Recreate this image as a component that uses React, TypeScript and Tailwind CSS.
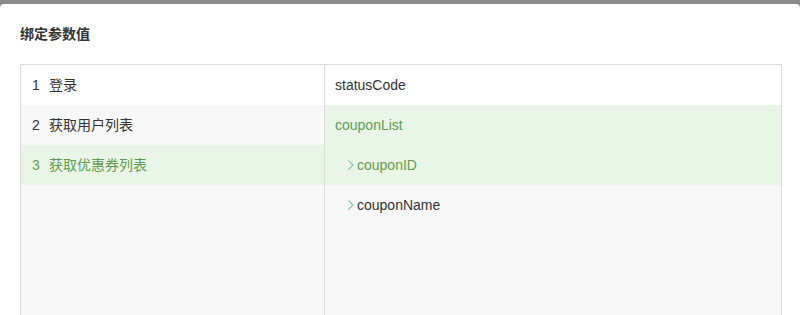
import React from "react";

const Chevron = () => (
  <svg width="8" height="12" viewBox="0 0 8 12" className="mr-[2px]">
    <path d="M1.5 1.5 L6 6 L1.5 10.5" fill="none" stroke="#8cc4b0" strokeWidth="1.2" />
  </svg>
);

export default function App() {
  const font = { fontFamily: '"Liberation Sans", "Noto Sans CJK SC", sans-serif' };
  return (
    <div className="w-[800px] h-[315px] bg-[#8a8a8a] pt-[4px] overflow-hidden" style={font}>
      <div className="bg-white h-full rounded-t-[4px] pl-[20px] pr-[18px]">
        <div className="h-[60px] flex items-center text-[14px] font-bold text-[#333]">绑定参数值</div>
        <div className="border border-[#dcdcdc] flex h-[260px] text-[14px]">
          <div className="w-[304px] bg-[#f8f8f8] border-r border-[#dcdcdc]">
            <div className="h-[40px] bg-white flex items-center pl-[11px] text-[#333]">
              <span className="w-[17px]">1</span>登录
            </div>
            <div className="h-[40px] flex items-center pl-[11px] text-[#333]">
              <span className="w-[17px]">2</span>获取用户列表
            </div>
            <div className="h-[40px] bg-[#e9f5e7] flex items-center pl-[11px] text-[#5f9e50]">
              <span className="w-[17px]">3</span>获取优惠券列表
            </div>
          </div>
          <div className="flex-1 bg-[#f8f8f8]">
            <div className="h-[40px] bg-white flex items-center pl-[10px] text-[#333]">statusCode</div>
            <div className="h-[40px] bg-[#e9f5e7] flex items-center pl-[10px] text-[#5f9e50]">couponList</div>
            <div className="h-[40px] bg-[#e9f5e7] flex items-center pl-[22px] text-[#5f9e50]">
              <Chevron />couponID
            </div>
            <div className="h-[40px] flex items-center pl-[22px] text-[#333]">
              <Chevron />couponName
            </div>
          </div>
        </div>
      </div>
    </div>
  );
}
